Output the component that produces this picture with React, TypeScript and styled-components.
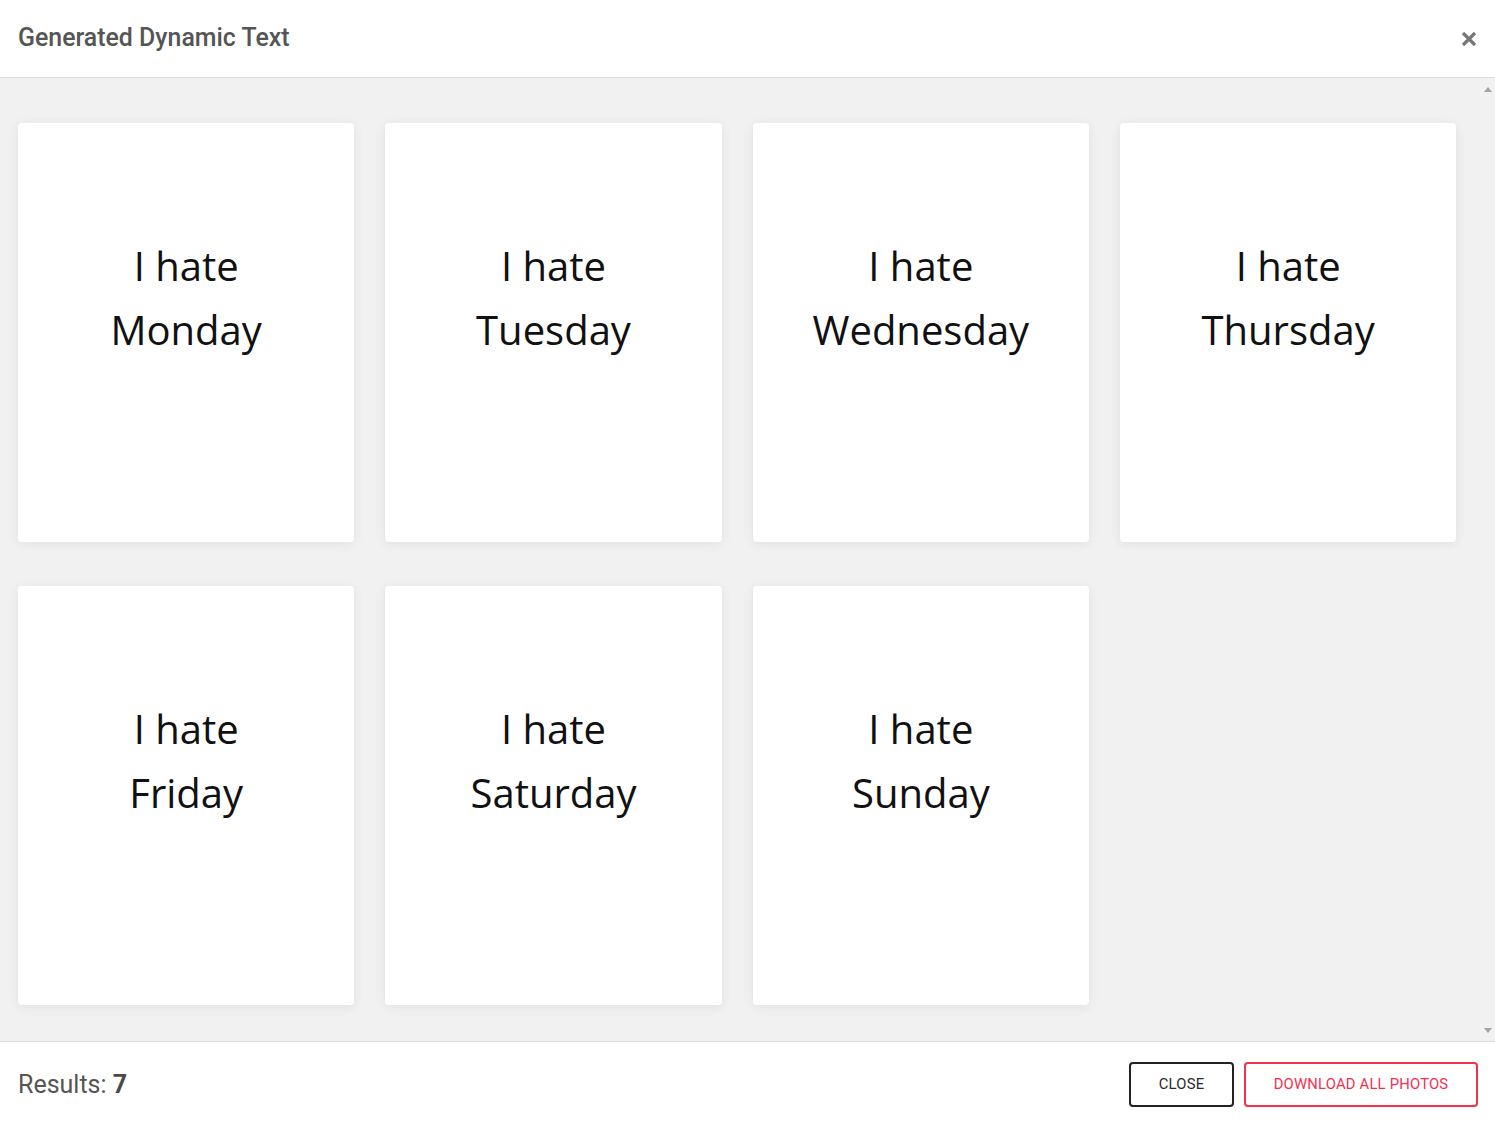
import styled, { createGlobalStyle } from "styled-components";

const GlobalStyle = createGlobalStyle`
  html, body {
    margin: 0;
    padding: 0;
    background: #ffffff;
  }
  * {
    box-sizing: border-box;
  }
`;

const days = ["Monday", "Tuesday", "Wednesday", "Thursday", "Friday", "Saturday", "Sunday"];

export const Modal = styled.div`
  width: 1495px;
  height: 1124px;
  display: flex;
  flex-direction: column;
  background: #ffffff;
  font-family: Roboto, "Liberation Sans", sans-serif;
  overflow: hidden;
`;

export const Header = styled.div`
  height: 78px;
  flex-shrink: 0;
  display: flex;
  align-items: center;
  justify-content: space-between;
  padding: 0 18px 0 18px;
  border-bottom: 1px solid #dcdcdc;
`;

export const Title = styled.h2`
  margin: 0;
  padding-bottom: 2px;
  font-size: 24.9px;
  font-weight: 500;
  color: #555555;
`;

export const CloseIcon = styled.button`
  width: 16px;
  height: 16px;
  padding: 0;
  border: none;
  background: transparent;
  display: flex;
  align-items: center;
  justify-content: center;
  cursor: pointer;
`;

export const Body = styled.div`
  flex: 1;
  display: flex;
  background: #f1f1f1;
  border-bottom: 1px solid #dcdcdc;
  min-height: 0;
`;

export const Grid = styled.div`
  flex: 1;
  display: grid;
  grid-template-columns: repeat(4, 336.33px);
  grid-auto-rows: 419px;
  column-gap: 31px;
  row-gap: 44px;
  padding: 45px 0 0 18px;
  align-content: start;
`;

export const Card = styled.div`
  background: #ffffff;
  border-radius: 4px;
  box-shadow: 0 2px 12px rgba(0, 0, 0, 0.07);
  display: flex;
  flex-direction: column;
  align-items: center;
  padding-top: 111px;
`;

export const CardLine = styled.div`
  font-family: "Open Sans", "Noto Sans", sans-serif;
  font-size: 40px;
  line-height: 64px;
  color: #111111;
  text-align: center;
`;

export const Gutter = styled.div`
  width: 15px;
  flex-shrink: 0;
  display: flex;
  flex-direction: column;
  justify-content: space-between;
  align-items: center;
  padding: 9px 0 8px 0;
`;

export const Arrow = styled.span<{ $down?: boolean }>`
  width: 0;
  height: 0;
  border-left: 4.5px solid transparent;
  border-right: 4.5px solid transparent;
  ${(props) =>
    props.$down
      ? "border-top: 5px solid #a3a3a3;"
      : "border-bottom: 5px solid #a3a3a3;"}
`;

export const Footer = styled.div`
  height: 82px;
  flex-shrink: 0;
  display: flex;
  align-items: center;
  justify-content: space-between;
  padding: 2px 17px 0 18px;
`;

export const Results = styled.div`
  font-size: 25px;
  color: #555555;
  strong {
    font-weight: 700;
    color: #4a4a4a;
  }
`;

export const Actions = styled.div`
  display: flex;
  gap: 10px;
`;

export const ActionButton = styled.button<{ $danger?: boolean }>`
  height: 45px;
  padding: 0;
  width: ${(props) => (props.$danger ? "234px" : "105px")};
  background: #ffffff;
  border: 2px solid ${(props) => (props.$danger ? "#f4304f" : "#222222")};
  border-radius: 4px;
  color: ${(props) => (props.$danger ? "#f4304f" : "#2a2a2a")};
  font-family: Roboto, "Liberation Sans", sans-serif;
  font-size: 14.8px;
  font-weight: 400;
  letter-spacing: 0.2px;
  text-transform: uppercase;
  cursor: pointer;
`;

export default function App() {
  return (
    <>
      <GlobalStyle />
      <Modal>
        <Header>
          <Title>Generated Dynamic Text</Title>
          <CloseIcon aria-label="close">
            <svg width="16" height="16" viewBox="0 0 16 16">
              <path d="M2 2 L14 14 M14 2 L2 14" stroke="#777777" strokeWidth="3.2" />
            </svg>
          </CloseIcon>
        </Header>
        <Body>
          <Grid>
            {days.map((day) => (
              <Card key={day}>
                <CardLine>I hate</CardLine>
                <CardLine>{day}</CardLine>
              </Card>
            ))}
          </Grid>
          <Gutter>
            <Arrow />
            <Arrow $down />
          </Gutter>
        </Body>
        <Footer>
          <Results>
            Results: <strong>7</strong>
          </Results>
          <Actions>
            <ActionButton>Close</ActionButton>
            <ActionButton $danger>Download all photos</ActionButton>
          </Actions>
        </Footer>
      </Modal>
    </>
  );
}
